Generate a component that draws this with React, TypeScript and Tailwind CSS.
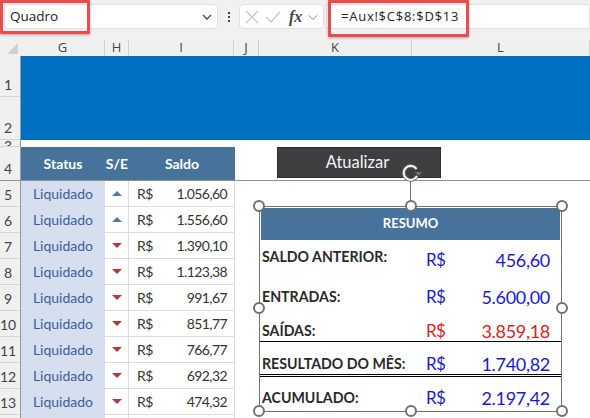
import React from "react";

const rows = [
  { n: 5, up: true, v: "1.056,60" },
  { n: 6, up: true, v: "1.556,60" },
  { n: 7, up: false, v: "1.390,10" },
  { n: 8, up: false, v: "1.123,38" },
  { n: 9, up: false, v: "991,67" },
  { n: 10, up: false, v: "851,77" },
  { n: 11, up: false, v: "766,77" },
  { n: 12, up: false, v: "692,32" },
  { n: 13, up: false, v: "474,32" },
];

const colHeaders = [
  { label: "G", w: "w-[84px]" },
  { label: "H", w: "w-[24px]" },
  { label: "I", w: "w-[105px]" },
  { label: "J", w: "w-[25px]" },
  { label: "K", w: "w-[153px]" },
  { label: "L", w: "w-[178px]" },
];

const summary = [
  { label: "SALDO ANTERIOR:", value: "456,60", color: "text-[#1a1acb]", h: "h-[29px]", line: "", lab: "mb-[3px]" },
  { label: "ENTRADAS:", value: "5.600,00", color: "text-[#1a1acb]", h: "h-[37px]", line: "", lab: "" },
  { label: "SAÍDAS:", value: "3.859,18", color: "text-[#e02020]", h: "h-[35px]", line: "border-b border-black", lab: "" },
  { label: "RESULTADO DO MÊS:", value: "1.740,82", color: "text-[#1a1acb]", h: "h-[35px]", line: "border-b-[3px] border-double border-black", lab: "" },
  { label: "ACUMULADO:", value: "2.197,42", color: "text-[#1a1acb]", h: "h-[31px]", line: "", lab: "" },
];

const Handle = ({ className }: { className: string }) => (
  <span className={`absolute w-[12px] h-[12px] rounded-full bg-white border-2 border-[#707070] ${className}`} />
);

const RowHead = ({ label, h }: { label: string; h: string }) => (
  <div className={`${h} flex items-end justify-center pr-[5px] pb-[4px] border-b border-[#d4d4d4] text-[14px] leading-none text-[#444] overflow-hidden`}>
    {label}
  </div>
);

export default function App() {
  return (
    <div className="w-[590px] h-[418px] overflow-hidden bg-white relative font-['Lato',sans-serif]">
      {/* Formula bar */}
      <div className="h-[40px] bg-[#f1f1f1] flex items-start pt-[4px] font-['Open_Sans',sans-serif]">
        <div className="ml-[4px] w-[214px] h-[25px] bg-white rounded border border-[#e0e0e0] flex items-center justify-end pr-[4px]">
          <svg width="12" height="12" viewBox="0 0 12 12" fill="none" stroke="#444" strokeWidth="1.3">
            <path d="M2 4l4 4 4-4" />
          </svg>
        </div>
        <div className="w-[21px] h-[25px] flex flex-col items-center justify-center gap-[2px]">
          <span className="w-[2px] h-[2px] bg-[#444]" />
          <span className="w-[2px] h-[2px] bg-[#444]" />
          <span className="w-[2px] h-[2px] bg-[#444]" />
        </div>
        <div className="w-[85px] h-[25px] bg-white rounded border border-[#e0e0e0] flex items-center pl-[5px] gap-[6px]">
          <svg width="14" height="14" viewBox="0 0 14 14" fill="none" stroke="#c4c4c4" strokeWidth="1.2">
            <path d="M1 1l12 12M13 1L1 13" />
          </svg>
          <svg width="16" height="14" viewBox="0 0 16 14" fill="none" stroke="#c4c4c4" strokeWidth="1.2">
            <path d="M1 7l5 5L15 2" />
          </svg>
          <span className="font-['Liberation_Serif',serif] italic font-bold text-[16px] leading-none text-[#444] ml-[2px]">fx</span>
          <svg width="10" height="10" viewBox="0 0 12 12" fill="none" stroke="#888" strokeWidth="1.2">
            <path d="M1 4l5 5 5-5" />
          </svg>
        </div>
        <div className="ml-[2px] flex-1 h-[25px] bg-white border border-[#e0e0e0] flex items-center pl-[14px] text-[13px] tracking-[0.75px] text-[#222]">
          =Aux!$C$8:$D$13
        </div>
      </div>

      {/* Column letters */}
      <div className="h-[16px] flex bg-[#f0f0f0]">
        <div className="w-[21px] relative shrink-0">
          <span className="absolute right-[3px] bottom-[2px] w-0 h-0 border-l-[11px] border-l-transparent border-b-[11px] border-b-[#d0d0d0]" />
        </div>
        {colHeaders.map((c) => (
          <div key={c.label} className={`${c.w} shrink-0 border-r border-[#d0d0d0] flex items-center justify-center text-[13px] text-[#444] font-['Open_Sans',sans-serif]`}>
            {c.label}
          </div>
        ))}
      </div>

      {/* Sheet */}
      <div className="flex">
        <div className="w-[21px] bg-[#f0f0f0] shrink-0 flex flex-col">
          <div className="h-[84px] flex flex-col">
            <RowHead label="1" h="h-[41px]" />
            <RowHead label="2" h="h-[43px]" />
          </div>
          <div className="h-[7px] border-b border-[#d4d4d4] flex justify-center pr-[5px] text-[14px] leading-none text-[#444] overflow-hidden items-end">
            <span className="translate-y-[7px]">3</span>
          </div>
          <div className="h-[34px] flex items-end justify-center pr-[5px] pb-[4px] border-b border-[#8f8f8f] text-[14px] leading-none text-[#444]">4</div>
          {rows.map((r) => (
            <RowHead key={r.n} label={String(r.n)} h="h-[26px]" />
          ))}
          <div className="h-[4px]" />
        </div>

        <div className="flex-1 min-w-0 border-l border-[#9a9a9a] -ml-px">
          <div className="h-[84px] bg-[#0070c0]" />
          <div className="h-[7px]" />
          <div className="h-[34px] flex border-b border-[#8f8f8f]">
            <div className="w-[214px] h-[33px] bg-[#47739b] flex text-white font-bold text-[14px]">
              <div className="w-[84px] flex items-center justify-center">Status</div>
              <div className="w-[24px] flex items-center justify-center">S/E</div>
              <div className="w-[106px] flex items-center justify-center">Saldo</div>
            </div>
          </div>
          {[...rows, { n: 14, up: null, v: "" }].map((r) => (
            <div key={r.n} className="h-[26px] w-[214px] flex border-b border-[#dcdcdc] text-[14px]">
              <div className="w-[84px] bg-[#d6dff0] flex items-center justify-center text-[#3b5e9b]">
                {r.v ? "Liquidado" : ""}
              </div>
              <div className="w-[24px] border-r border-[#dcdcdc] flex items-center justify-center">
                {r.up === true && (
                  <span className="w-0 h-0 border-x-[5px] border-x-transparent border-b-[5px] border-b-[#4f7ba0]" />
                )}
                {r.up === false && (
                  <span className="w-0 h-0 border-x-[5px] border-x-transparent border-t-[5px] border-t-[#b5383a]" />
                )}
              </div>
              <div className="w-[106px] border-r border-[#dcdcdc] flex items-center justify-between pl-[8px] pr-[7px] text-[#333]">
                {r.v && <span className="tracking-[-0.5px]">R$</span>}
                <span className="tracking-[-0.6px]">{r.v}</span>
              </div>
            </div>
          ))}
        </div>
      </div>

      {/* Atualizar button */}
      <div className="absolute left-[277px] top-[147px] w-[164px] h-[31px] bg-[#3f3f41] border border-[#1f2f40] flex items-center justify-center pr-[3px] pb-[1px] text-[#f4f4f4] text-[16.5px] font-normal">
        Atualizar
      </div>

      {/* Selected summary picture */}
      <div className="absolute left-[259px] top-[206px] w-[303px] h-[206px] bg-white border border-[#707070]">
        <div className="h-[34px] bg-[#47739b] border border-white flex items-center justify-center text-white font-bold text-[13px]">
          RESUMO
        </div>
        {summary.map((s) => (
          <div key={s.label} className={`${s.h} ${s.line} flex items-end pl-[2px] pr-[11px]`}>
            <span className={`${s.lab} w-[164px] font-bold text-[14.2px] leading-[20px] text-[#2a2a2a] whitespace-nowrap`}>{s.label}</span>
            <span className={`text-[17px] leading-[20px] tracking-[-0.6px] ${s.color}`}>R$</span>
            <span className={`flex-1 text-right text-[18px] leading-[20px] tracking-[-0.3px] ${s.color}`}>{s.value}</span>
          </div>
        ))}
      </div>

      {/* Rotate handle */}
      <div className="absolute left-[410px] top-[178px] w-px h-[28px] bg-[#707070]" />
      <svg className="absolute left-[400px] top-[162px]" width="22" height="22" viewBox="0 0 22 22" fill="none">
        <path d="M16.5 7a7 7 0 1 0 0.5 7" stroke="#707070" strokeWidth="3.6" />
        <path d="M16.5 7a7 7 0 1 0 0.5 7" stroke="#ffffff" strokeWidth="1.8" />
        <path d="M15 10h7l-3.5 4z" fill="#707070" />
      </svg>

      <Handle className="left-[253px] top-[200px]" />
      <Handle className="left-[405px] top-[200px]" />
      <Handle className="left-[556px] top-[200px]" />
      <Handle className="left-[253px] top-[302px]" />
      <Handle className="left-[556px] top-[302px]" />
      <Handle className="left-[253px] top-[405px]" />
      <Handle className="left-[405px] top-[405px]" />
      <Handle className="left-[556px] top-[405px]" />

      {/* Red callouts */}
      <div className="absolute left-0 top-0 w-[90px] h-[34px] border-[3px] border-[#ee4b4b] rounded-[1px] shadow-[0_1px_3px_rgba(0,0,0,0.3)] flex items-center pl-[7px] pb-[2px] text-[13.5px] text-[#222] font-['Open_Sans',sans-serif]">
        Quadro
      </div>
      <div className="absolute left-[328px] top-0 w-[141px] h-[37px] border-[3px] border-[#ee4b4b] rounded-[1px] shadow-[0_1px_3px_rgba(0,0,0,0.3)]" />
    </div>
  );
}
